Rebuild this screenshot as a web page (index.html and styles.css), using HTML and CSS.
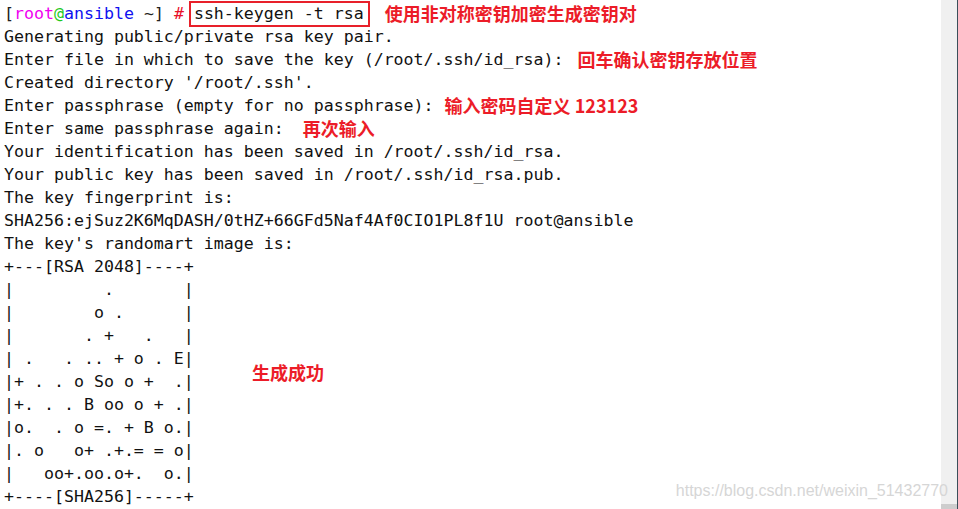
FILE: index.html
```html
<!DOCTYPE html>
<html lang="zh-CN">
<head>
<meta charset="utf-8">
<title>ssh-keygen</title>
<link rel="stylesheet" href="styles.css">
</head>
<body>
<div class="window">
  <div class="term">
    <div class="ln"><span class="br">[</span><span class="usr">root</span><span class="at">@</span><span class="host">ansible</span><span class="br"> ~]</span> <span class="hash">#</span> <span class="cmd">ssh-keygen -t rsa</span><span class="note note-1">使用非对称密钥加密生成密钥对</span></div>
    <div class="ln">Generating public/private rsa key pair.</div>
    <div class="ln">Enter file in which to save the key (/root/.ssh/id_rsa):<span class="note note-2">回车确认密钥存放位置</span></div>
    <div class="ln">Created directory '/root/.ssh'.</div>
    <div class="ln">Enter passphrase (empty for no passphrase):<span class="note note-3">输入密码自定义 123123</span></div>
    <div class="ln">Enter same passphrase again:<span class="note note-4">再次输入</span></div>
    <div class="ln">Your identification has been saved in /root/.ssh/id_rsa.</div>
    <div class="ln">Your public key has been saved in /root/.ssh/id_rsa.pub.</div>
    <div class="ln">The key fingerprint is:</div>
    <div class="ln">SHA256:ejSuz2K6MqDASH/0tHZ+66GFd5Naf4Af0CIO1PL8f1U root@ansible</div>
    <div class="ln">The key's randomart image is:</div>
    <div class="ln">+---[RSA 2048]----+</div>
    <div class="ln">|         .       |</div>
    <div class="ln">|        o .      |</div>
    <div class="ln">|       . +   .   |</div>
    <div class="ln">| .   . .. + o . E|</div>
    <div class="ln">|+ . . o So o +  .|</div>
    <div class="ln">|+. . . B oo o + .|</div>
    <div class="ln">|o.  . o =. + B o.|</div>
    <div class="ln">|. o   o+ .+.= = o|</div>
    <div class="ln">|   oo+.oo.o+.  o.|</div>
    <div class="ln">+----[SHA256]-----+</div>
    <span class="note note-float">生成成功</span>
  </div>
  <div class="scrollbar"><div class="thumb"></div></div>
  <div class="watermark">https://blog.csdn.net/weixin_51432770</div>
</div>
</body>
</html>
```
FILE: styles.css
```css
html, body {
  margin: 0;
  padding: 0;
  background: #ffffff;
}
.window {
  position: relative;
  display: flex;
  width: 958px;
  height: 509px;
  overflow: hidden;
}
.term {
  position: relative;
  flex: 1;
  padding: 2px 0 0 4px;
  font-family: "DejaVu Sans Mono", "Liberation Mono", monospace;
  font-size: 16.6px;
  color: #111111;
}
.ln {
  height: 23px;
  line-height: 23px;
  white-space: pre;
}
.br { color: #222222; }
.usr { color: #f000f0; }
.at { color: #1ec81e; }
.host { color: #1010f0; }
.hash { color: #e8102a; }
.cmd {
  border: 2px solid #e8202a;
  padding: 1px 4px 2px 3px;
  margin: 0 -6px 0 -5px;
}
.note {
  font-family: "Noto Sans CJK SC", "Noto Sans", sans-serif;
  font-weight: 700;
  font-size: 18px;
  line-height: 23px;
  vertical-align: top;
  color: #ec1c28;
}
.note-1 { margin-left: 21px; }
.note-2 { margin-left: 14px; }
.note-3 { margin-left: 11px; }
.note-4 { margin-left: 19px; }
.note-float {
  position: absolute;
  left: 252px;
  top: 361px;
}
.scrollbar {
  width: 16px;
  background: #f0f0f0;
  border-right: 1px solid #3b4f5a;
  display: flex;
  flex-direction: column;
  justify-content: flex-end;
}
.thumb {
  height: 5px;
  background: #cdcdcd;
}
.watermark {
  position: absolute;
  right: 10px;
  bottom: 9px;
  font-family: "Liberation Sans", Arial, sans-serif;
  font-size: 16px;
  color: #d6d6d6;
  white-space: nowrap;
}
```
